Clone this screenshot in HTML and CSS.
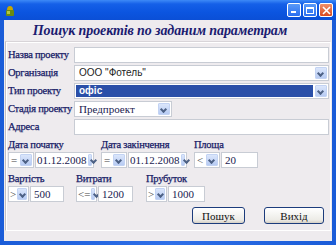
FILE: index.html
```html
<!DOCTYPE html>
<html lang="uk">
<head>
<meta charset="utf-8">
<link rel="stylesheet" href="styles.css">
</head>
<body>
<div class="window">
  <div class="titlebar">
    <svg class="app-icon" width="12" height="12" viewBox="0 0 12 12">
      <path d="M3 5 Q3 1 6 1 Q9 1 9 5 Z" fill="#c8a800"/>
      <rect x="2" y="5" width="8" height="6" rx="1" fill="#6a8a10"/>
      <rect x="3" y="6" width="3" height="3" fill="#b0c840"/>
    </svg>
    <div class="spacer"></div>
    <div class="tb-btn"><span class="min-glyph"></span></div>
    <div class="tb-btn"><span class="max-glyph"></span></div>
    <div class="tb-btn close"><svg width="9" height="9" viewBox="0 0 9 9"><path d="M1 1 L8 8 M8 1 L1 8" stroke="#fff" stroke-width="1.6"/></svg></div>
  </div>
  <div class="client">
    <h1 class="title">Пошук проектів по заданим параметрам</h1>
    <div class="panel">
      <div class="row">
        <span class="label">Назва проекту</span>
        <div class="input wide"></div>
      </div>
      <div class="row">
        <span class="label">Організація</span>
        <div class="combo wide"><span class="val sans">ООО "Фотель"</span><span class="dd"></span></div>
      </div>
      <div class="row">
        <span class="label">Тип проекту</span>
        <div class="combo wide"><span class="val sans sel">офіс</span><span class="dd"></span></div>
      </div>
      <div class="row">
        <span class="label">Стадія проекту</span>
        <div class="combo stage"><span class="val">Предпроект</span><span class="dd"></span></div>
      </div>
      <div class="row">
        <span class="label">Адреса</span>
        <div class="input wide"></div>
      </div>

      <div class="grid3">
        <div class="cell">
          <span class="label">Дата початку</span>
          <div class="pair">
            <div class="combo op"><span class="val">=</span><span class="dd"></span></div>
            <div class="combo date"><span class="val">01.12.2008</span><span class="dd"></span></div>
          </div>
        </div>
        <div class="cell">
          <span class="label">Дата закінчення</span>
          <div class="pair">
            <div class="combo op"><span class="val">=</span><span class="dd"></span></div>
            <div class="combo date"><span class="val">01.12.2008</span><span class="dd"></span></div>
          </div>
        </div>
        <div class="cell">
          <span class="label">Площа</span>
          <div class="pair">
            <div class="combo op"><span class="val">&lt;</span><span class="dd"></span></div>
            <div class="input num area"><span class="val">20</span></div>
          </div>
        </div>
      </div>

      <div class="grid3b">
        <div class="cell">
          <span class="label">Вартість</span>
          <div class="pair">
            <div class="combo op2"><span class="val">&gt;</span><span class="dd"></span></div>
            <div class="input num n1"><span class="val">500</span></div>
          </div>
        </div>
        <div class="cell">
          <span class="label">Витрати</span>
          <div class="pair">
            <div class="combo op2"><span class="val">&lt;=</span><span class="dd"></span></div>
            <div class="input num n2"><span class="val">1200</span></div>
          </div>
        </div>
        <div class="cell">
          <span class="label">Прубуток</span>
          <div class="pair">
            <div class="combo op2"><span class="val">&gt;</span><span class="dd"></span></div>
            <div class="input num n3"><span class="val">1000</span></div>
          </div>
        </div>
      </div>

      <div class="buttons">
        <div class="btn b1">Пошук</div>
        <div class="btn b2">Вихід</div>
      </div>
    </div>
  </div>
</div>
</body>
</html>
```
FILE: styles.css
```css
* { box-sizing: border-box; }
html, body { margin: 0; padding: 0; }
body { width: 336px; height: 245px; overflow: hidden; font-family: "Liberation Serif", serif; }

.window {
  width: 336px; height: 245px;
  display: flex; flex-direction: column;
  background: linear-gradient(90deg, #1a5cd8, #2f6fe8 50%, #1a5cd8);
  padding: 0 4px 4px 4px;
}
.titlebar {
  height: 20px;
  display: flex; align-items: center;
  margin: 0 -4px; padding: 0 3px 0 4px;
  background: linear-gradient(180deg, #3d8af7 0%, #1560e8 20%, #0b55e0 60%, #0a4fd6 100%);
  gap: 2px;
}
.app-icon { margin-top: 1px; }
.spacer { flex: 1; }
.tb-btn {
  width: 14px; height: 14px;
  border: 1px solid #fff;
  border-radius: 2px;
  background: linear-gradient(180deg, #5a9af8, #2a6ef0);
  position: relative;
  display: flex; align-items: center; justify-content: center;
}
.tb-btn.close { background: linear-gradient(180deg, #f0906a, #d84a20); }
.min-glyph { width: 5px; height: 2px; background: #fff; position: absolute; left: 3px; bottom: 3px; }
.max-glyph { width: 8px; height: 7px; border: 1px solid #fff; border-top-width: 2px; }

.client {
  flex: 1;
  background: #eeebee;
  display: flex; flex-direction: column;
  padding: 0 1px 10px 1px;
}
.title {
  margin: 0; height: 18px;
  font: italic bold 14px "Liberation Serif", serif;
  color: #1b1b70;
  text-align: center;
  line-height: 18px;
  padding: 2px 16px 0 0;
  letter-spacing: -0.1px;
}
.panel {
  flex: 1;
  border-top: 1px solid #d8d4d8;
  border-left: 1px solid #c4c0c4;
  border-bottom: 1px solid #fff;
  border-right: 1px solid #fff;
  box-shadow: inset 1px 1px 0 #fff;
  margin-top: 3px;
  padding: 4px 1px 0 2px;
  display: flex; flex-direction: column;
}
.row { display: flex; align-items: center; height: 17px; }
.row + .row { margin-top: 1px; }
.label {
  font-size: 10.5px; color: #161a66;
  white-space: nowrap;
  -webkit-text-stroke: 0.25px #161a66;
  letter-spacing: -0.25px;
}
.row .label { width: 66px; }

.input, .combo {
  height: 16px;
  background: #fff;
  border: 1px solid #c8ccd4;
  display: flex; align-items: center;
  position: relative;
}
.wide { flex: 1; }
.val { font-size: 11px; color: #1a1a50; padding-left: 4px; white-space: nowrap; }
.sans { font-family: "Liberation Sans", sans-serif; font-size: 10px; color: #222; }
.combo .val { flex: 1; }
.val.sel {
  background: #2a4fa8; color: #fff; font-weight: bold;
  align-self: stretch; display: flex; align-items: center;
  margin: 1px 1px 1px 1px; padding-left: 3px;
}
.dd {
  width: 12px; align-self: stretch;
  margin: 1px;
  background: linear-gradient(180deg, #dbe6fb, #b7cbf3);
  border: 1px solid #c3d3f3;
  border-radius: 1px;
  position: relative;
}
.dd::after {
  content: ""; position: absolute;
  left: 2px; top: 3px;
  width: 3px; height: 3px;
  border-right: 2px solid #4d6185; border-bottom: 2px solid #4d6185;
  transform: rotate(45deg);
}
.stage { width: 98px; }

.grid3, .grid3b { display: flex; margin-top: 3px; }
.grid3 .cell:nth-child(1) { width: 93px; }
.grid3 .cell:nth-child(2) { width: 93px; }
.grid3b { margin-top: 4px; }
.grid3b .cell:nth-child(1) { width: 68px; }
.grid3b .cell:nth-child(2) { width: 70px; }
.cell { display: flex; flex-direction: column; gap: 1px; }
.cell .label { height: 13px; line-height: 13px; }
.pair { display: flex; gap: 1px; }
.op { width: 26px; }
.op .val { padding-left: 2px; color: #444; }
.op2 { width: 21px; }
.op2 .val { padding-left: 1px; color: #444; }
.op2 .dd { width: 11px; }
.date { width: 59px; }
.date .val { padding-left: 1px; }
.num .val { padding-left: 3px; }
.area { width: 37px; }
.n1 { width: 34px; }
.n2 { width: 35px; }
.n3 { width: 37px; }

.buttons { display: flex; justify-content: flex-end; gap: 19px; margin-top: 5px; padding-right: 5px; }
.btn {
  height: 17px;
  border: 1px solid #1c3c7c;
  border-radius: 3px;
  background: linear-gradient(180deg, #ffffff, #ecebe6 80%, #d6d0c5);
  font-size: 11px; color: #111;
  display: flex; align-items: center; justify-content: center;
}
.b1 { width: 53px; }
.b2 { width: 60px; }
```
